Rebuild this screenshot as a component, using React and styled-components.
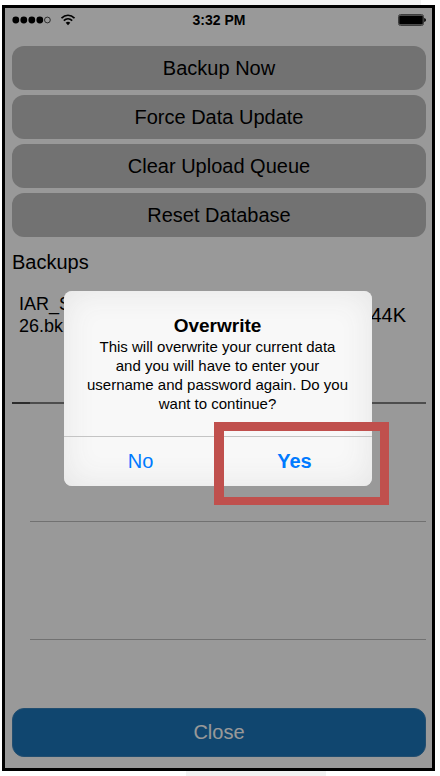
import React from 'react';
import styled, { createGlobalStyle, css } from 'styled-components';

const GlobalStyle = createGlobalStyle`
    *{
        box-sizing:border-box;
    }
    body{
        margin:0;
        background:#fff;
        font-family:"Liberation Sans", Arial, sans-serif;
        color:#000;
    }
`;

const Page = styled.div`
    display:flex;
    min-height:100vh;
    padding:5px 5px 5px 2px;
    background:
        linear-gradient(#f2f2f2, #f2f2f2) 70px 0 / 351px 5px no-repeat,
        linear-gradient(#f2f2f2, #f2f2f2) 186px 100% / 140px 5px no-repeat;
`;

const Phone = styled.main`
    position:relative;
    flex:1;
    display:flex;
    flex-direction:column;
    padding:0 6px 11px 7px;
    border:3px solid #000;
    background:#fff;
`;

const StatusBar = styled.header`
    display:grid;
    grid-template-columns:1fr auto 1fr;
    align-items:center;
    height:24px;
    margin-bottom:14px;
    font-size:14px;
    font-weight:bold;
`;

const Signal = styled.div`
    display:flex;
    align-items:center;
    gap:10px;
`;

const BatteryIcon = styled.svg`
    justify-self:end;
`;

const Actions = styled.div`
    display:flex;
    flex-direction:column;
    gap:5px;
`;

const ActionButton = styled.button`
    height:44px;
    border:0;
    border-radius:12px;
    background:#bfbfbf;
    color:#000;
    font-family:inherit;
    font-size:20px;
    ${({ $primary }) => $primary && css`
        height:49px;
        margin-top:auto;
        border:1px solid #3a83bb;
        background:#1c75b9;
        color:#fff;
    `}
`;

const Heading = styled.h2`
    margin:13px 0 12px;
    font-size:20px;
    font-weight:normal;
    line-height:24px;
`;

const BackupList = styled.ul`
    margin:0;
    padding:0;
    list-style:none;
`;

const BackupRow = styled.li`
    display:flex;
    justify-content:space-between;
    align-items:flex-start;
    height:118px;
    margin-left:18px;
    border-bottom:1px solid #bdbdbd;
    ${({ $first }) => $first && css`
        margin-left:0;
        padding:7px 20px 0 7px;
        border-bottom:2px solid #808080;
        border-image:linear-gradient(90deg, #4a4a4a 18px, #808080 18px) 0 0 2;
    `}
`;

const FileName = styled.span`
    font-size:18px;
    line-height:22px;
`;

const FileSize = styled.span`
    font-size:20px;
    line-height:44px;
`;

const Overlay = styled.div`
    position:absolute;
    inset:0;
    display:flex;
    align-items:center;
    justify-content:center;
    padding:1px 2px 0 0;
    background:rgba(0, 0, 0, 0.4);
`;

const Alert = styled.section`
    width:308px;
    border-radius:8px;
    background:#f8f8f8;
    box-shadow:inset 0 0 32px #e4e4e4;
    text-align:center;
`;

const AlertBody = styled.div`
    height:146px;
    padding:24px 12px 0;
    border-bottom:1px solid #c4c4c4;
`;

const AlertTitle = styled.h1`
    margin:0;
    font-size:19px;
    line-height:22px;
`;

const AlertText = styled.p`
    margin:0;
    font-size:15px;
    line-height:19px;
`;

const AlertButtons = styled.div`
    display:grid;
    grid-template-columns:1fr 1fr;
`;

const AlertButton = styled.button`
    position:relative;
    height:49px;
    border:0;
    background:none;
    color:#007aff;
    font-family:inherit;
    font-size:20px;
    font-weight:${({ $strong }) => ($strong ? 'bold' : 'normal')};
`;

// red frame around the answer to press
const Marker = styled.span`
    position:absolute;
    inset:-15px -17px -19px -4px;
    border:9px solid #c0504d;
    border-width:9px 9px 8px 10px;
    pointer-events:none;
`;

const actions = ['Backup Now', 'Force Data Update', 'Clear Upload Queue', 'Reset Database'];

const App =()=>{
    return(
        <>
            <GlobalStyle />
            <Page>
                <Phone>
                    <StatusBar>
                        <Signal>
                            <svg width="39" height="8" viewBox="0 0 39 8">
                                {[3.8, 11.8, 19.8, 27.8].map(x => <circle key={x} cx={x} cy="4" r="3.4" />)}
                                <circle cx="35.4" cy="4" r="2.9" fill="none" stroke="#000" strokeWidth="0.7" />
                            </svg>
                            <svg width="14" height="12" viewBox="0 0 14 12" fill="none" stroke="#000" strokeWidth="1.6">
                                <path d="M0.5 4.2C4.2 0.3 9.8 0.3 13.5 4.2" />
                                <path d="M2.8 6.7C5.3 4.3 8.7 4.3 11.2 6.7" />
                                <path d="M4.7 8.8C6 7.4 8 7.4 9.3 8.8L7 11.2Z" fill="#000" stroke="none" />
                            </svg>
                        </Signal>
                        <span>3:32 PM</span>
                        <BatteryIcon width="28" height="12" viewBox="0 0 28 12">
                            <rect x="0.5" y="0.5" width="25" height="11" rx="2" fill="none" stroke="#666" />
                            <rect x="1.2" y="1.4" width="23.6" height="9.2" rx="1" />
                            <path d="M26.2 4Q28 4.4 28 6T26.2 8Z" />
                        </BatteryIcon>
                    </StatusBar>
                    <Actions>
                        {actions.map(name => <ActionButton key={name} type="button">{name}</ActionButton>)}
                    </Actions>
                    <Heading>Backups</Heading>
                    <BackupList>
                        <BackupRow $first>
                            <FileName>IAR_S<br />26.bk</FileName>
                            <FileSize>44K</FileSize>
                        </BackupRow>
                        <BackupRow />
                        <BackupRow />
                    </BackupList>
                    <ActionButton type="button" $primary>Close</ActionButton>
                    <Overlay>
                        <Alert role="alertdialog" aria-labelledby="alert-title" aria-describedby="alert-text">
                            <AlertBody>
                                <AlertTitle id="alert-title">Overwrite</AlertTitle>
                                <AlertText id="alert-text">
                                    This will overwrite your current data<br />
                                    and you will have to enter your<br />
                                    username and password again. Do you<br />
                                    want to continue?
                                </AlertText>
                            </AlertBody>
                            <AlertButtons>
                                <AlertButton type="button">No</AlertButton>
                                <AlertButton type="button" $strong>
                                    Yes
                                    <Marker />
                                </AlertButton>
                            </AlertButtons>
                        </Alert>
                    </Overlay>
                </Phone>
            </Page>
        </>
    )
}

export default App;
